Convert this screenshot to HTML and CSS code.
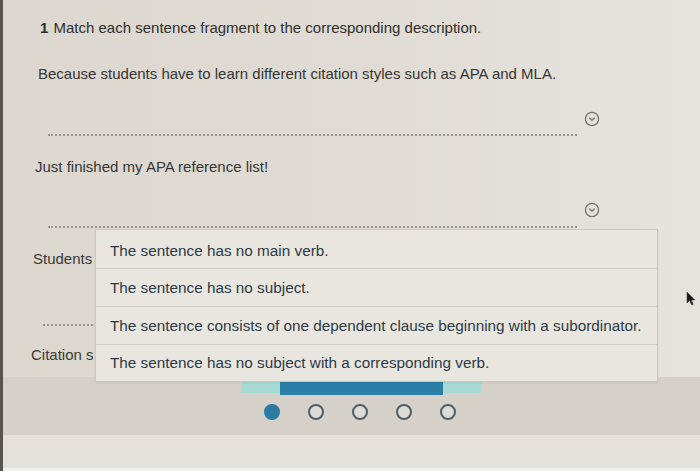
FILE: index.html
```html
<!DOCTYPE html>
<html lang="en">
<head>
<meta charset="utf-8">
<title>Match sentence fragments</title>
<link rel="stylesheet" href="styles.css">
</head>
<body>
<div class="screen">
  <main class="quiz">
    <p class="title"><b>1</b> Match each sentence fragment to the corresponding description.</p>
    <p class="prompt p1">Because students have to learn different citation styles such as APA and MLA.</p>
    <div class="answer a1">
      <div class="blank"></div>
      <svg class="chev" width="16" height="16" viewBox="0 0 16 16"><circle cx="8" cy="8" r="6.6" fill="none" stroke="#767470" stroke-width="1.3"/><path d="M5.6 7 L8 9.4 L10.4 7" fill="none" stroke="#767470" stroke-width="1.3" stroke-linecap="round" stroke-linejoin="round"/></svg>
    </div>
    <p class="prompt p2">Just finished my APA reference list!</p>
    <div class="answer a2">
      <div class="blank"></div>
      <svg class="chev" width="16" height="16" viewBox="0 0 16 16"><circle cx="8" cy="8" r="6.6" fill="none" stroke="#767470" stroke-width="1.3"/><path d="M5.6 7 L8 9.4 L10.4 7" fill="none" stroke="#767470" stroke-width="1.3" stroke-linecap="round" stroke-linejoin="round"/></svg>
    </div>
    <div class="match">
      <p class="frag f1">Students</p>
      <div class="short-blank"></div>
      <p class="frag f2">Citation s</p>
      <ul class="menu">
        <li class="opt">The sentence has no main verb.</li>
        <li class="opt">The sentence has no subject.</li>
        <li class="opt">The sentence consists of one dependent clause beginning with a subordinator.</li>
        <li class="opt">The sentence has no subject with a corresponding verb.</li>
      </ul>
    </div>
  </main>
  <footer class="nav">
    <div class="progress"><div class="fill"></div></div>
    <div class="dots">
      <span class="dot on"></span>
      <span class="dot"></span>
      <span class="dot"></span>
      <span class="dot"></span>
      <span class="dot"></span>
    </div>
  </footer>
  <div class="bottom"></div>
  <svg class="cursor" width="10" height="15" viewBox="0 0 10 15"><path d="M1 1 L1 12 L3.6 9.6 L5.6 14 L7.2 13.3 L5.3 9 L8.8 9 Z" fill="#1c1c1c" stroke="#444" stroke-width="0.6"/></svg>
</div>
</body>
</html>
```
FILE: styles.css
```css
html, body {
  margin: 0;
  padding: 0;
}
body {
  width: 700px;
  height: 471px;
  overflow: hidden;
  font-family: "Liberation Sans", Arial, Helvetica, sans-serif;
  font-size: 15px;
  color: #333230;
}
.screen {
  position: relative;
  height: 471px;
  border-left: 3px solid #57534e;
  background: linear-gradient(90deg, #dcd8d0 0%, #e0dcd5 50%, #e6e3dd 100%);
  display: flex;
  flex-direction: column;
}
.quiz {
  display: flow-root;
  padding-top: 18px;
}
p {
  margin: 0;
  line-height: 20px;
  height: 20px;
  white-space: nowrap;
}
.title {
  padding-left: 37px;
  color: #2f2e2c;
}
.title b {
  font-weight: bold;
  margin-right: 1px;
}
.prompt {
  color: #363532;
}
.p1 {
  margin-top: 26px;
  padding-left: 35px;
}
.p2 {
  margin-top: 21px;
  padding-left: 32px;
}
.answer {
  display: flex;
  align-items: flex-start;
  gap: 7px;
  margin-left: 45px;
}
.blank {
  width: 529px;
  border-bottom: 2px dotted #97938c;
}
.a1 .blank { height: 50px; }
.a1 .chev { margin-top: 27px; }
.a2 .blank { height: 49px; }
.a2 .chev { margin-top: 25px; }

.match {
  position: relative;
  display: flow-root;
  height: 149px;
}
.frag {
  color: #3a3936;
}
.f1 {
  margin-top: 21px;
  padding-left: 30px;
}
.short-blank {
  margin-left: 40px;
  width: 50px;
  height: 55px;
  border-bottom: 2px dotted #97938c;
}
.f2 {
  margin-top: 19px;
  padding-left: 28px;
}
.menu {
  position: absolute;
  left: 92px;
  top: 1px;
  width: 561px;
  margin: 0;
  padding: 0;
  list-style: none;
  background: #e9e6e0;
  border: 1px solid #cdc9c1;
  box-shadow: 0 1px 2px rgba(0, 0, 0, 0.08);
  font-size: 15.3px;
}
.opt {
  height: 37px;
  display: flex;
  align-items: center;
  padding-left: 14px;
  color: #2c3a45;
  white-space: nowrap;
  border-top: 1px solid #d3cfc7;
}
.opt:first-child {
  border-top: none;
  height: 38px;
  align-items: flex-start;
  padding-top: 12px;
  box-sizing: border-box;
}
.opt:last-child {
  align-items: flex-end;
  padding-bottom: 9px;
  box-sizing: border-box;
}

.nav {
  height: 58px;
  background: #d5d1c9;
  padding-top: 6px;
  box-sizing: border-box;
}
.progress {
  margin-left: 238px;
  width: 240px;
  height: 11px;
  background: #a7dad3;
}
.fill {
  margin-left: 39px;
  margin-top: -1px;
  width: 163px;
  height: 13px;
  background: #2b7ea6;
}
.dots {
  display: flex;
  gap: 28px;
  margin-left: 261px;
  margin-top: 11px;
}
.dot {
  width: 12px;
  height: 12px;
  border: 2px solid #4d5e69;
  border-radius: 50%;
  background: #dedbd4;
}
.dot.on {
  background: #2a7ba4;
  border-color: #2a7ba4;
}
.bottom {
  height: 33px;
  background: #e4e1da;
  border-bottom: 3px solid #f1efeb;
}
.cursor {
  position: absolute;
  left: 683px;
  top: 291px;
}
```
